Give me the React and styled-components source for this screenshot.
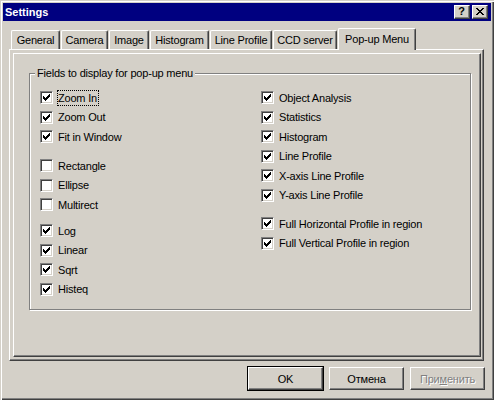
import React from 'react'
import styled, { createGlobalStyle } from 'styled-components'

const GlobalStyle = createGlobalStyle`
  html, body {
    margin: 0;
    padding: 0;
    background: #d4d0c8;
  }
  body {
    font-family: "Liberation Sans", Arial, sans-serif;
    font-size: 11px;
    color: #000;
  }
`

const tabs = [
  { name: 'General', w: 49 },
  { name: 'Camera', w: 47 },
  { name: 'Image', w: 40 },
  { name: 'Histogram', w: 59 },
  { name: 'Line Profile', w: 62 },
  { name: 'CCD server', w: 64 },
  { name: 'Pop-up Menu', w: 78, active: true },
]

const leftGroups = [
  { gap: 0, items: [['Zoom In', true, true], ['Zoom Out', true], ['Fit in Window', true]] },
  { gap: 16, items: [['Rectangle', false], ['Ellipse', false], ['Multirect', false]] },
  { gap: 13, items: [['Log', true], ['Linear', true], ['Sqrt', true], ['Histeq', true]] },
]

const rightGroups = [
  {
    gap: 0,
    items: [
      ['Object Analysis', true],
      ['Statistics', true],
      ['Histogram', true],
      ['Line Profile', true],
      ['X-axis Line Profile', true],
      ['Y-axis Line Profile', true],
    ],
  },
  { gap: 15.5, items: [['Full Horizontal Profile in region', true], ['Full Vertical Profile in region', true]] },
]

const checkPattern = [
  '......X',
  '.....XX',
  'X...XXX',
  'XX.XXX.',
  'XXXXX..',
  '.XXX...',
  '..X....',
]

const closePattern = [
  'XX....XX',
  '.XX..XX.',
  '..XXXX..',
  '...XX...',
  '..XXXX..',
  '.XX..XX.',
  'XX....XX',
]

function Pixels({ pattern, color = '#000' }) {
  const w = pattern[0].length
  const h = pattern.length
  return (
    <svg width={w} height={h} viewBox={`0 0 ${w} ${h}`} shapeRendering="crispEdges">
      {pattern.map((row, y) =>
        row.split('').map((c, x) =>
          c === 'X' ? <rect key={`${x}-${y}`} x={x} y={y} width="1" height="1" fill={color} /> : null
        )
      )}
    </svg>
  )
}

const Window = styled.div`
  width: 494px;
  height: 400px;
  box-sizing: border-box;
  padding: 3px;
  background: #d4d0c8;
  box-shadow: inset 1px 1px #d4d0c8, inset 2px 2px #fff, inset -1px -1px #404040, inset -2px -2px #808080;
  display: flex;
  flex-direction: column;
`

const TitleBar = styled.div`
  height: 18px;
  background: #000080;
  display: flex;
  align-items: center;
  padding: 0 3px 0 2px;
`

const Title = styled.div`
  flex: 1;
  color: #fff;
  font-weight: bold;
  font-size: 11px;
`

const CaptionButtons = styled.div`
  display: flex;
  gap: 2px;
`

const CaptionButton = styled.div`
  width: 16px;
  height: 14px;
  box-sizing: border-box;
  background: #d4d0c8;
  border: 1px solid;
  border-color: #fff #404040 #404040 #fff;
  box-shadow: inset -1px -1px #808080;
  display: flex;
  align-items: center;
  justify-content: center;
  font-weight: bold;
  font-size: 11px;
  line-height: 11px;
  padding: 0 1px 1px 0;
`

const Body = styled.div`
  padding: 7px 7px 0 6px;
`

const TabStrip = styled.div`
  display: flex;
  align-items: flex-end;
  height: 21px;
  padding-left: 2px;
`

const Tab = styled.div`
  position: relative;
  width: ${p => p.$w}px;
  height: ${p => (p.$active ? 22 : 19)}px;
  margin-right: 1px;
  margin-bottom: ${p => (p.$active ? -1 : 0)}px;
  z-index: ${p => (p.$active ? 1 : 0)};
  box-sizing: border-box;
  background: #d4d0c8;
  border-left: 1px solid #fff;
  border-top: 1px solid #fff;
  border-right: 1px solid #404040;
  border-radius: 2px 2px 0 0;
  box-shadow: inset -1px 0 #808080;
  display: flex;
  align-items: center;
  justify-content: center;
  padding-bottom: ${p => (p.$active ? 2 : 0)}px;
  white-space: nowrap;
  letter-spacing: -0.2px;
`

const Bevel = styled.div`
  box-sizing: border-box;
  border: 1px solid;
  border-color: #fff #404040 #404040 #fff;
  box-shadow: inset -1px -1px #808080;
`

const Panel = styled(Bevel)`
  height: 312px;
  padding: 3px 2px 3px 3px;
  display: flex;
`

const Page = styled(Bevel)`
  flex: 1;
  padding: 19px 0 0 15px;
`

const GroupBox = styled.div`
  position: relative;
  width: 442px;
  height: 237px;
  box-sizing: border-box;
  border: 1px solid #808080;
  box-shadow: inset 1px 1px #fff, 1px 1px 0 #fff;
  padding: 17px 0 0 10px;
  display: grid;
  grid-template-columns: 221px 1fr;
  align-items: start;
`

const Legend = styled.span`
  position: absolute;
  top: -7px;
  left: 5px;
  padding: 0 2px;
  line-height: 13px;
  background: #d4d0c8;
  letter-spacing: -0.2px;
`

const ColumnStack = styled.div`
  display: flex;
  flex-direction: column;
`

const Group = styled.div`
  display: flex;
  flex-direction: column;
  gap: 6.5px;
  margin-top: ${p => p.$gap}px;
`

const Row = styled.div`
  display: flex;
  align-items: center;
  height: 13px;
`

const Box = styled.div`
  width: 13px;
  height: 13px;
  box-sizing: border-box;
  background: #fff;
  border: 1px solid;
  border-color: #808080 #fff #fff #808080;
  box-shadow: inset 1px 1px #404040, inset -1px -1px #d4d0c8;
  display: flex;
  align-items: center;
  justify-content: center;
  flex: none;
`

const Label = styled.span`
  margin-left: 4px;
  line-height: 14px;
  border: 1px ${p => (p.$focus ? 'dotted #000' : 'solid transparent')};
  padding: 0 1px 0 0;
  white-space: nowrap;
  letter-spacing: -0.2px;
`

const ButtonRow = styled.div`
  display: flex;
  justify-content: flex-end;
  gap: 6px;
  margin-top: 6px;
  padding-right: 6px;
`

const Button = styled.button`
  width: 75px;
  height: 23px;
  box-sizing: border-box;
  margin: 0;
  background: #d4d0c8;
  border: 1px solid;
  border-color: #fff #404040 #404040 #fff;
  box-shadow: inset -1px -1px #808080;
  outline: ${p => (p.$default ? '1px solid #000' : 'none')};
  font-family: "Liberation Sans", Arial, sans-serif;
  font-size: 11px;
  color: ${p => (p.disabled ? '#808080' : '#000')};
  text-shadow: ${p => (p.disabled ? '1px 1px 0 #fff' : 'none')};
  padding: 0;
  letter-spacing: -0.2px;
`

function Check({ label, checked, focus }) {
  return (
    <Row>
      <Box>{checked && <Pixels pattern={checkPattern} />}</Box>
      <Label $focus={focus}>{label}</Label>
    </Row>
  )
}

function Column({ groups }) {
  return (
    <ColumnStack>
      {groups.map((g, i) => (
        <Group key={i} $gap={g.gap}>
          {g.items.map(([label, checked, focus]) => (
            <Check key={label} label={label} checked={checked} focus={focus} />
          ))}
        </Group>
      ))}
    </ColumnStack>
  )
}

export default function App() {
  return (
    <>
      <GlobalStyle />
      <Window>
        <TitleBar>
          <Title>Settings</Title>
          <CaptionButtons>
            <CaptionButton>?</CaptionButton>
            <CaptionButton>
              <Pixels pattern={closePattern} />
            </CaptionButton>
          </CaptionButtons>
        </TitleBar>
        <Body>
          <TabStrip>
            {tabs.map(t => (
              <Tab key={t.name} $w={t.w} $active={t.active}>
                {t.name}
              </Tab>
            ))}
          </TabStrip>
          <Panel>
            <Page>
              <GroupBox>
                <Legend>Fields to display for pop-up menu</Legend>
                <Column groups={leftGroups} />
                <Column groups={rightGroups} />
              </GroupBox>
            </Page>
          </Panel>
        </Body>
        <ButtonRow>
          <Button $default>OK</Button>
          <Button>Отмена</Button>
          <Button disabled>
            При<u>м</u>енить
          </Button>
        </ButtonRow>
      </Window>
    </>
  )
}
